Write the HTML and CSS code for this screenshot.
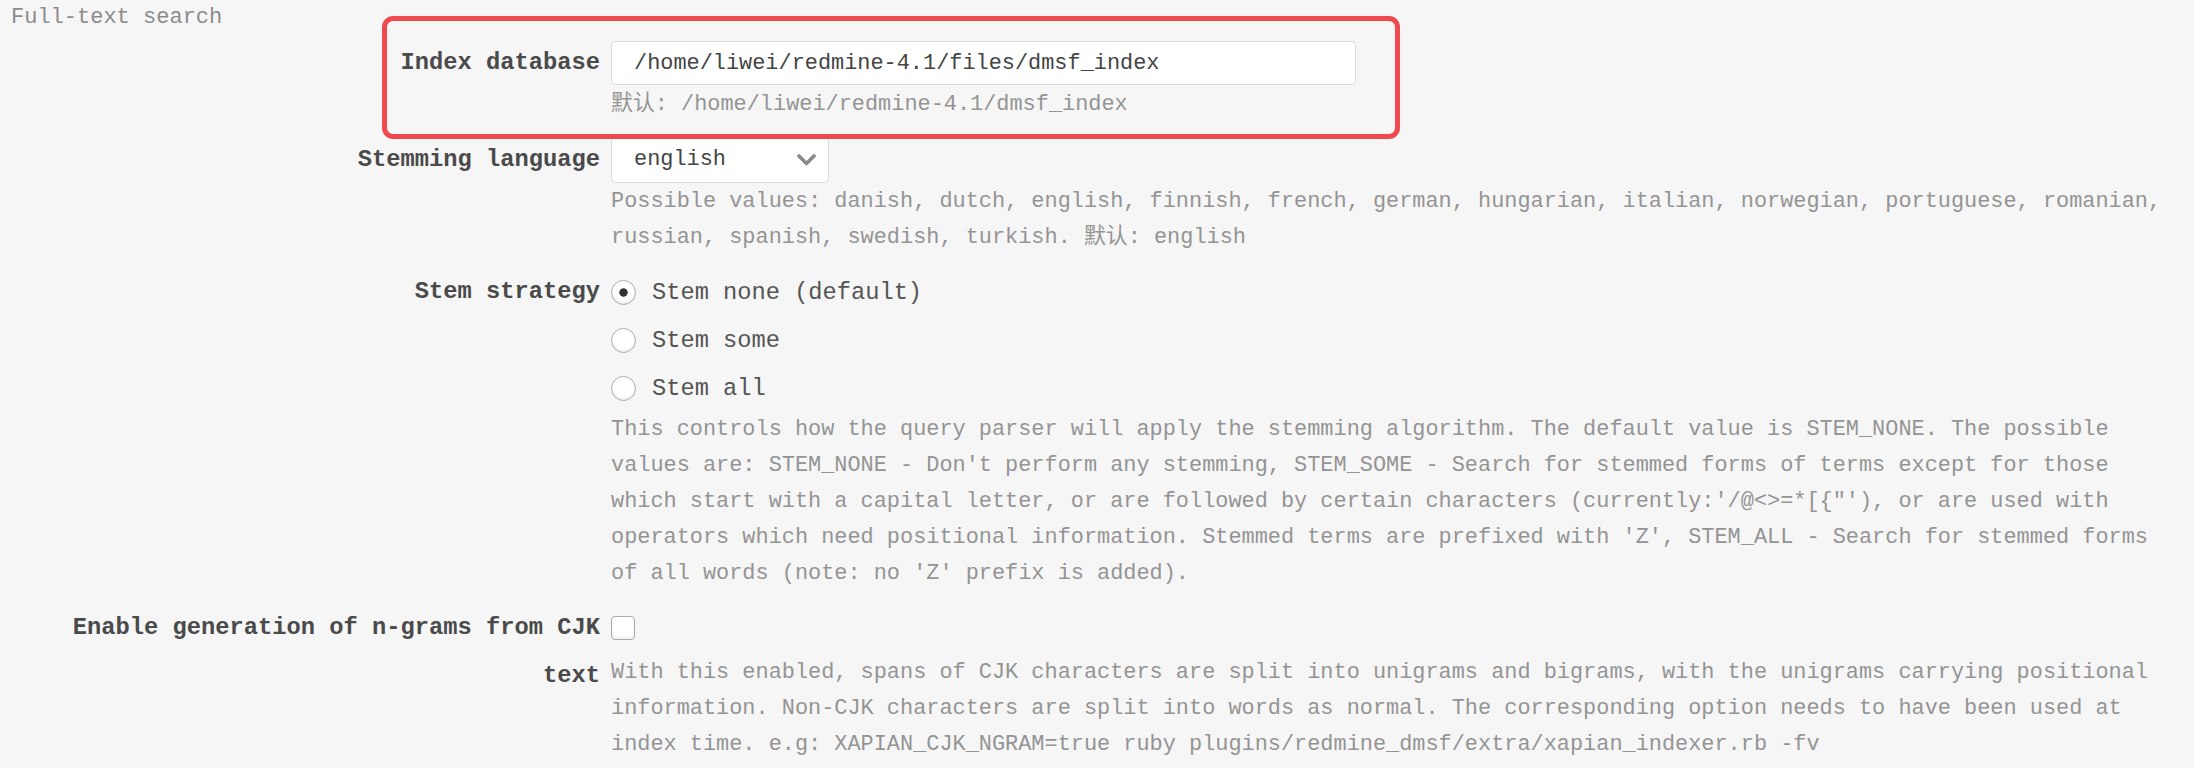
FILE: index.html
```html
<!DOCTYPE html>
<html lang="en">
<head>
<meta charset="utf-8">
<title>Full-text search</title>
<link rel="stylesheet" href="styles.css">
</head>
<body>
<div class="page">
  <div class="legend">Full-text search</div>
  <div class="form">
    <div class="row row-highlight">
      <label class="label" for="index-db">Index database</label>
      <div class="control">
        <div class="line">
          <input class="text-input" id="index-db" type="text" value="/home/liwei/redmine-4.1/files/dmsf_index">
        </div>
        <p class="desc">默认: /home/liwei/redmine-4.1/dmsf_index</p>
      </div>
    </div>

    <div class="row">
      <label class="label">Stemming language</label>
      <div class="control">
        <div class="line">
          <div class="select">
            <span class="select-value">english</span>
            <svg class="chevron" width="19" height="12" viewBox="0 0 19 12"><polyline points="2,2 9.5,9.5 17,2" fill="none" stroke="#8a8a8a" stroke-width="3.6" stroke-linecap="round" stroke-linejoin="round"/></svg>
          </div>
        </div>
        <p class="desc">Possible values: danish, dutch, english, finnish, french, german, hungarian, italian, norwegian, portuguese, romanian, russian, spanish, swedish, turkish. 默认: english</p>
      </div>
    </div>

    <div class="row">
      <label class="label">Stem strategy</label>
      <div class="control">
        <label class="line choice"><input class="radio" type="radio" name="stem" checked><span>Stem none (default)</span></label>
        <label class="line choice"><input class="radio" type="radio" name="stem"><span>Stem some</span></label>
        <label class="line choice"><input class="radio" type="radio" name="stem"><span>Stem all</span></label>
        <p class="desc">This controls how the query parser will apply the stemming algorithm. The default value is STEM_NONE. The possible values are: STEM_NONE - Don't perform any stemming, STEM_SOME - Search for stemmed forms of terms except for those which start with a capital letter, or are followed by certain characters (currently:'/@&lt;&gt;=*[{"'), or are used with operators which need positional information. Stemmed terms are prefixed with 'Z', STEM_ALL - Search for stemmed forms of all words (note: no 'Z' prefix is added).</p>
      </div>
    </div>

    <div class="row">
      <label class="label" for="cjk">Enable generation of n-grams from CJK text</label>
      <div class="control">
        <div class="line"><input class="checkbox" id="cjk" type="checkbox"></div>
        <p class="desc desc-after-check">With this enabled, spans of CJK characters are split into unigrams and bigrams, with the unigrams carrying positional information. Non-CJK characters are split into words as normal. The corresponding option needs to have been used at index time. e.g: XAPIAN_CJK_NGRAM=true ruby plugins/redmine_dmsf/extra/xapian_indexer.rb -fv</p>
      </div>
    </div>
  </div>
</div>
</body>
</html>
```

FILE: styles.css
```css
* {
  box-sizing: border-box;
}

html,
body {
  margin: 0;
  background: #f6f6f6;
}

body {
  font-family: "Liberation Mono", "Courier New", "Noto Sans CJK SC", monospace;
  color: #555;
}

.page {
  padding: 0 18px 0 11px;
}

.legend {
  padding-top: 3px;
  font-size: 22px;
  line-height: 30px;
  color: #8c8c8c;
}

.form {
  display: flex;
  flex-direction: column;
  gap: 13px;
  margin-top: 6px;
}

.row {
  display: flex;
  gap: 11px;
}

.row-highlight {
  position: relative;
}

.row-highlight::before {
  content: "";
  position: absolute;
  left: 371px;
  top: -23px;
  width: 1008px;
  height: 113px;
  border: 5px solid #ee4a4f;
  border-radius: 11px;
  pointer-events: none;
}

.label {
  flex: none;
  width: 589px;
  text-align: right;
  font-weight: bold;
  font-size: 23.75px;
  line-height: 48px;
  color: #4a4a4a;
}

.control {
  flex: 1;
  min-width: 0;
}

.line {
  height: 48px;
  display: flex;
  align-items: center;
}

.line.choice {
  height: 48px;
  font-size: 23.7px;
  color: #555;
}

.desc {
  margin: 0;
  font-size: 21.9px;
  line-height: 35.8px;
  color: #949494;
}

.desc-after-check {
  margin-top: 3px;
}

.text-input {
  width: 745px;
  height: 44px;
  margin: 0;
  padding: 0 0 0 22px;
  border: 1px solid #dadada;
  border-radius: 4px;
  background: #fff;
  font-family: "Liberation Mono", "Courier New", monospace;
  font-size: 21.9px;
  color: #444;
  outline: none;
}

.select {
  width: 218px;
  height: 46px;
  display: flex;
  align-items: center;
  justify-content: space-between;
  padding: 0 12px 0 22px;
  border: 1px solid #dcdcdc;
  border-radius: 5px;
  background: #fff;
  font-size: 21.9px;
  color: #444;
}

.chevron {
  display: block;
}

.radio {
  appearance: none;
  -webkit-appearance: none;
  flex: none;
  width: 25px;
  height: 25px;
  margin: 0 16px 0 0;
  border: 1px solid #acacac;
  border-radius: 50%;
  background: #fff;
  box-shadow: inset 0 -2px 3px rgba(0, 0, 0, 0.07);
}

.radio:checked {
  background: radial-gradient(circle, #333 0, #333 3.8px, #fff 4.6px);
}

.checkbox {
  appearance: none;
  -webkit-appearance: none;
  width: 24px;
  height: 24px;
  margin: 0;
  border: 1px solid #aaa;
  border-radius: 4px;
  background: #fff;
  box-shadow: inset 0 -2px 3px rgba(0, 0, 0, 0.06);
}
```
